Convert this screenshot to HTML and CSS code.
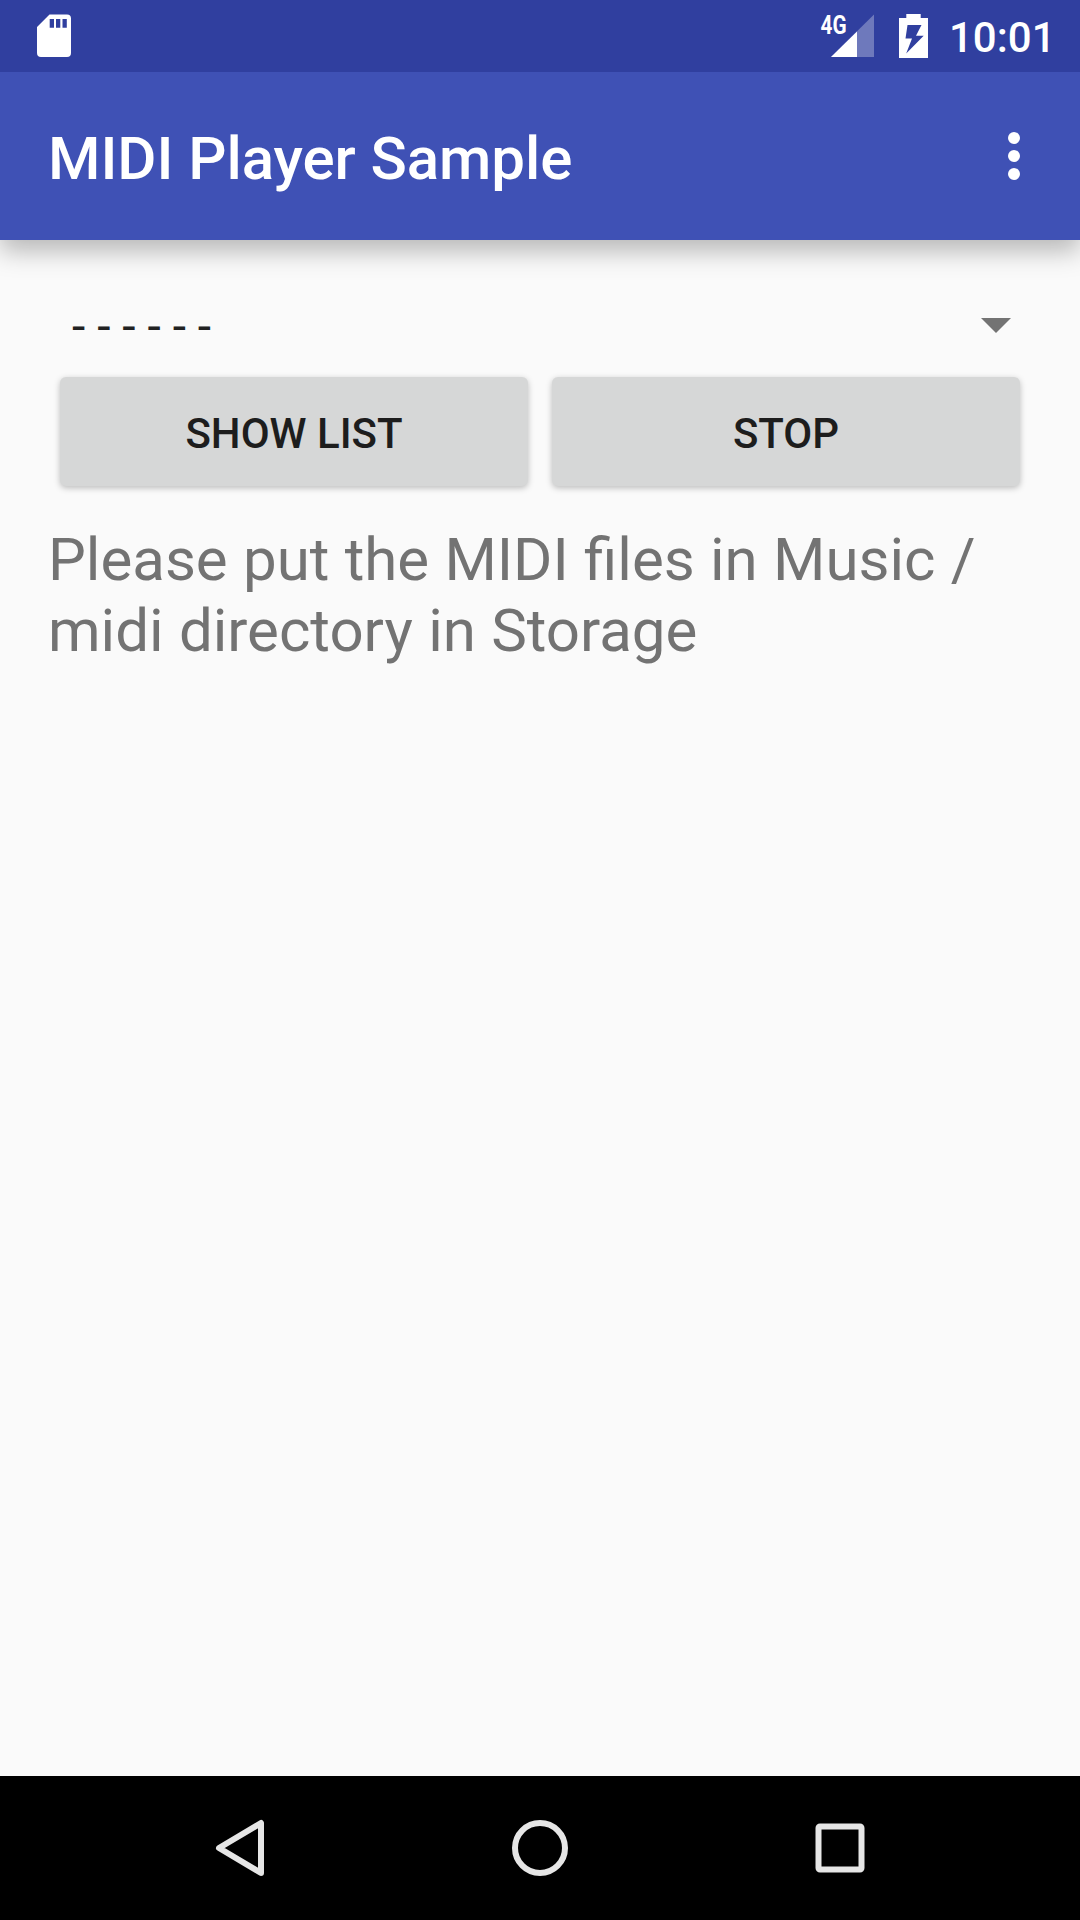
FILE: index.html
```html
<!DOCTYPE html>
<html lang="en">
<head>
<meta charset="utf-8">
<title>MIDI Player Sample</title>
<link rel="stylesheet" href="styles.css">
</head>
<body>
<div class="screen">
  <div class="status-bar">
    <svg class="sd-icon" width="36" height="44" viewBox="0 0 36 44"><path fill="#fff" fill-rule="evenodd" d="M13.5.5H31a4 4 0 0 1 4 4V39a4 4 0 0 1-4 4H5a4 4 0 0 1-4-4V13zM13.700 5v8.700h4.300V5zM20 5v8.700h4.300V5zM26.500 5v8.700h4.300V5z"/></svg>
    <div class="status-right">
      <svg class="signal-icon" width="62" height="50" viewBox="-6 -6 62 50">
        <path fill="#fff" fill-opacity=".3" d="M54 .5V43H11z"/>
        <path fill="#fff" d="M37 17.500V43H11z"/>
        <text class="network" x=".5" y="19.600" textLength="26" lengthAdjust="spacingAndGlyphs">4G</text>
      </svg>
      <svg class="battery-icon" width="29" height="44" viewBox="0 0 29 44"><path fill="#fff" fill-rule="evenodd" d="M7.300 0H21.700V4H29V44H0V4H7.300zM8.500 11 6.500 24.500H13L7.200 39.500 24.700 21.700H17L22.500 11z"/></svg>
      <span class="clock">10:01</span>
    </div>
  </div>
  <header class="app-bar">
    <h1 class="title">MIDI Player Sample</h1>
    <svg class="more-icon" width="12" height="48" viewBox="0 0 12 48" fill="#fff"><circle cx="6" cy="6" r="6"/><circle cx="6" cy="24" r="6"/><circle cx="6" cy="42" r="6"/></svg>
  </header>
  <main class="content">
    <div class="spinner">
      <span class="selected">- - - - - -</span>
      <svg width="30" height="15" viewBox="0 0 30 15"><path fill="#737373" d="M0 0h30L15 15z"/></svg>
    </div>
    <div class="buttons">
      <button class="button">SHOW LIST</button>
      <button class="button">STOP</button>
    </div>
    <p class="message">Please put the MIDI files in Music / midi directory in Storage</p>
  </main>
  <nav class="nav-bar">
    <svg width="60" height="60" viewBox="0 0 60 60"><path d="M9 30 51 5V55z"/></svg>
    <svg width="60" height="60" viewBox="0 0 60 60"><circle cx="30" cy="30" r="25"/></svg>
    <svg width="60" height="60" viewBox="0 0 60 60"><rect x="8.500" y="8.500" width="43" height="43" rx="1.500"/></svg>
  </nav>
</div>
</body>
</html>
```
FILE: styles.css
```css
* { box-sizing: border-box; }
body { margin: 0; font-family: Roboto, sans-serif; background: #fafafa; }
.screen { width: 1080px; height: 1920px; display: flex; flex-direction: column; overflow: hidden; }
.status-bar { z-index: 1; height: 72px; flex: none; background: #303f9f; display: flex; justify-content: space-between; align-items: flex-start; padding: 14px 27px 0 36px; }
.status-right { display: flex; align-items: flex-start; }
.signal-icon { margin: -6px 23px 0 0; }
.battery-icon { margin-right: 21px; }
.network { font: 700 25.5px Roboto, sans-serif; fill: #fff; }
.clock { width: 104px; font-size: 42px; font-weight: 500; line-height: 47px; white-space: nowrap; color: #fff; }
.app-bar { height: 168px; flex: none; background: #3f51b5; display: flex; justify-content: space-between; align-items: center; padding: 0 60px 0 48px; box-shadow: 0 11px 24px rgba(0, 0, 0, .27); }
.title { margin: 0; padding-top: 5px; font-size: 60px; font-weight: 500; line-height: 70px; letter-spacing: -.06px; color: #fff; }
.content { flex: 1; padding: 48px 48px 0; }
.spinner { height: 77px; display: flex; justify-content: space-between; align-items: center; padding: 0 21px 2px 24px; font-size: 48px; color: #212121; }
.selected { padding-top: 2px; }
.buttons { display: flex; gap: 24px; padding: 12px 12px; }
.button { flex: 1; height: 109px; padding: 5px 0 0; border: 0; border-radius: 6px; background: #d6d7d7; font: 500 42px/48px Roboto, sans-serif; color: #1d1d1d; box-shadow: 0 2px 6px rgba(0, 0, 0, .25); }
.message { margin: 0; padding-top: 26px; font-size: 60px; line-height: 71px; word-spacing: .4px; color: #737373; }
.nav-bar { height: 144px; flex: none; background: #000; display: flex; justify-content: center; align-items: center; gap: 240px; }
.nav-bar svg { fill: none; stroke: #e6e6e6; stroke-width: 6; stroke-linejoin: round; }
```
